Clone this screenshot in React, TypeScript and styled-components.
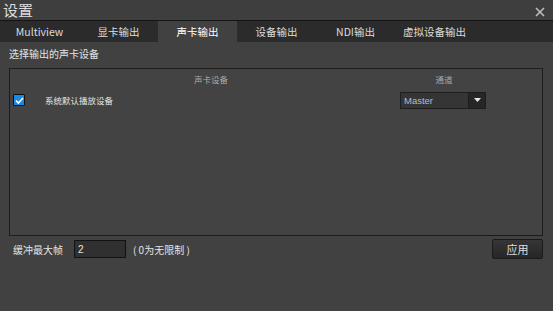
import React, { useState } from 'react';
import styled, { createGlobalStyle, css } from 'styled-components';

const GlobalStyle = createGlobalStyle`
  html, body {
    margin: 0;
    padding: 0;
    background: #414141;
  }
  body {
    font-family: "Noto Sans CJK SC", "Noto Sans", sans-serif;
    font-size: 12px;
    color: #e2e2e2;
  }
`;

const TABS = ['Multiview', '显卡输出', '声卡输出', '设备输出', 'NDI输出', '虚拟设备输出'];

const App = () => {
  const [active, setActive] = useState(2);
  const [checked, setChecked] = useState(true);

  return (
    <Window>
      <GlobalStyle />
      <TitleBar>
        <Title>设置</Title>
        <Close>
          <svg width="10" height="10" viewBox="0 0 10 10">
            <path d="M1 1 L9 9 M9 1 L1 9" stroke="#bdbdbd" strokeWidth="1.6" />
          </svg>
        </Close>
      </TitleBar>
      <TabBar>
        {TABS.map((t, i) => (
          <Tab key={t} active={i === active} onClick={() => setActive(i)}>
            {t}
          </Tab>
        ))}
      </TabBar>
      <Body>
        <SectionLabel>选择输出的声卡设备</SectionLabel>
        <GroupBox>
          <HeaderRow>
            <HeaderCell>声卡设备</HeaderCell>
            <HeaderCell>通道</HeaderCell>
          </HeaderRow>
          <DeviceRow>
            <CheckBox checked={checked} onClick={() => setChecked(!checked)}>
              {checked && (
                <svg width="9" height="7" viewBox="0 0 9 7">
                  <path d="M1 3.6 L3.4 6 L8 1" stroke="#fff" strokeWidth="1.6" fill="none" />
                </svg>
              )}
            </CheckBox>
            <DeviceName>系统默认播放设备</DeviceName>
            <Select>
              <SelectText>Master</SelectText>
              <SelectArrow>
                <svg width="7" height="4" viewBox="0 0 7 4">
                  <path d="M0 0 H7 L3.5 4 Z" fill="#e8e8e8" />
                </svg>
              </SelectArrow>
            </Select>
          </DeviceRow>
        </GroupBox>
        <Footer>
          <FieldLabel>缓冲最大帧</FieldLabel>
          <NumberInput defaultValue="2" />
          <Hint>( 0为无限制 )</Hint>
          <ApplyButton>应用</ApplyButton>
        </Footer>
      </Body>
    </Window>
  );
};

export default App;

const Window = styled.div`
  width: 553px;
  height: 311px;
  background: #414141;
  display: flex;
  flex-direction: column;
  overflow: hidden;
`;

const TitleBar = styled.div`
  height: 20px;
  display: flex;
  align-items: center;
  justify-content: space-between;
  padding: 0 8px 0 3px;
  background: #3e3e3e;
  border-bottom: 1px solid #141414;
`;

const Title = styled.div`
  font-size: 15px;
  color: #dcdcdc;
  line-height: 20px;
  margin-top: -1px;
`;

const Close = styled.div`
  display: flex;
  align-items: center;
  margin-top: 4px;
  cursor: pointer;
`;

const TabBar = styled.div`
  height: 21px;
  display: flex;
  background: #2b2b2b;
`;

const Tab = styled.div<{ active: boolean }>`
  width: 79px;
  display: flex;
  align-items: center;
  justify-content: center;
  font-size: 10.5px;
  color: #dcdcdc;
  cursor: pointer;
  ${(props) =>
    props.active &&
    css`
      background: #414141;
      color: #ffffff;
    `}
`;

const Body = styled.div`
  flex: 1;
  display: flex;
  flex-direction: column;
  padding: 4px 10px 0 9px;
`;

const SectionLabel = styled.div`
  font-size: 10px;
  line-height: 16px;
  color: #e4e4e4;
`;

const GroupBox = styled.div`
  margin-top: 6px;
  height: 166px;
  border: 1px solid #1c1c1c;
  background: #434343;
  display: flex;
  flex-direction: column;
`;

const HeaderRow = styled.div`
  display: grid;
  grid-template-columns: 402px 64px;
  padding-top: 2px;
  height: 16px;
`;

const HeaderCell = styled.div`
  font-size: 8.5px;
  color: #a8a8a8;
  text-align: center;
  line-height: 16px;
`;

const DeviceRow = styled.div`
  display: flex;
  align-items: center;
  height: 18px;
  margin-top: 4px;
  padding-left: 3px;
`;

const CheckBox = styled.div<{ checked: boolean }>`
  width: 10px;
  height: 10px;
  border: 1px solid #111;
  border-radius: 1px;
  background: ${(props) => (props.checked ? '#1a8ae6' : '#2a2a2a')};
  display: flex;
  align-items: center;
  justify-content: center;
  cursor: pointer;
`;

const DeviceName = styled.div`
  margin-left: 20px;
  font-size: 8.5px;
  color: #e4e4e4;
  flex: 1;
`;

const Select = styled.div`
  width: 86px;
  height: 17px;
  margin-right: 56px;
  display: flex;
  border: 1px solid #1e1e1e;
  background: #353535;
  box-sizing: border-box;
`;

const SelectText = styled.div`
  flex: 1;
  padding-left: 3px;
  font-family: "Liberation Sans", Arial, sans-serif;
  font-size: 9.5px;
  line-height: 15px;
  color: #b4bcc8;
`;

const SelectArrow = styled.div`
  width: 16px;
  background: #262626;
  border-left: 1px solid #1c1c1c;
  display: flex;
  align-items: center;
  justify-content: center;
`;

const Footer = styled.div`
  display: flex;
  align-items: center;
  margin-top: 3px;
  height: 20px;
  padding-left: 4px;
`;

const FieldLabel = styled.div`
  font-size: 10px;
  color: #e4e4e4;
  width: 61px;
`;

const NumberInput = styled.input`
  width: 52px;
  height: 18px;
  box-sizing: border-box;
  background: #303030;
  border: 1px solid #121212;
  color: #e8e8e8;
  font-family: "Liberation Sans", Arial, sans-serif;
  font-size: 10px;
  padding: 0 3px;
  outline: none;
`;

const Hint = styled.div`
  margin-left: 7px;
  font-size: 10px;
  color: #e4e4e4;
  flex: 1;
`;

const ApplyButton = styled.button`
  width: 51px;
  height: 20px;
  border: 1px solid #1a1a1a;
  border-radius: 2px;
  background: linear-gradient(#363636, #262626);
  color: #dedede;
  font-family: "Noto Sans CJK SC", sans-serif;
  font-size: 11px;
  padding: 0;
  cursor: pointer;
`;
